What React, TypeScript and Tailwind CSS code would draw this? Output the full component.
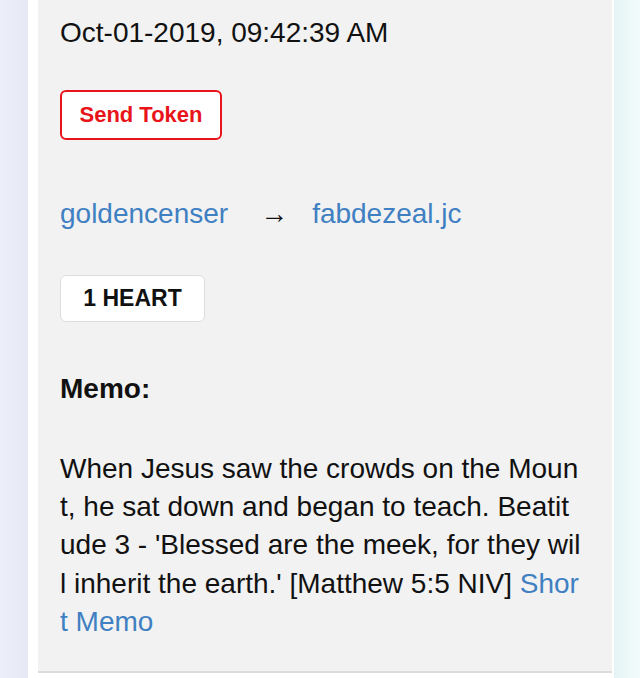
export default function App() {
  return (
    <div
      className="flex h-[678px] w-[640px] overflow-hidden bg-white"
      style={{ fontFamily: '"Liberation Sans", Arial, Helvetica, sans-serif' }}
    >
      {/* left page background */}
      <div className="w-[28px] shrink-0 bg-gradient-to-r from-[#eceef9] to-[#e6e8f5]" />

      {/* card */}
      <div className="flex w-[586px] shrink-0 flex-col bg-white pl-[10px] pr-[2px]">
        <div className="border-b-2 border-[#dcdcdc] bg-[#f2f2f2] pb-[30px] pl-[22px] pr-[31px] pt-[14px] text-[28px] leading-[38.25px] text-[#111]">
          <p className="whitespace-nowrap">Oct-01-2019, 09:42:39 AM</p>

          <div className="mt-[38px]">
            <button className="h-[50px] w-[162px] rounded-[6px] border-2 border-[#e8141a] bg-white text-[22px] font-bold text-[#e8141a]">
              Send Token
            </button>
          </div>

          <p className="mt-[55px] whitespace-nowrap">
            <a className="text-[#3f80c2]">goldencenser</a>
            <span className="ml-[30px] mr-[22px] inline-block w-[32px] text-center text-[#111]">→</span>
            <a className="text-[#3f80c2]">fabdezeal.jc</a>
          </p>

          <div className="mt-[41px]">
            <span className="inline-flex h-[47px] w-[145px] items-center justify-center rounded-[6px] border border-[#dddddd] bg-white text-[23px] font-bold text-[#111]">
              1 HEART
            </span>
          </div>

          <p className="mt-[48px] font-bold">Memo:</p>

          <p className="mt-[42px] break-all">
            When Jesus saw the crowds on the Mount, he sat down and began to teach. Beatitude 3 - 'Blessed are the meek, for they will inherit the earth.' [Matthew 5:5 NIV]{' '}
            <a className="text-[#3f80c2]">Short Memo</a>
          </p>
        </div>
      </div>

      {/* right page background */}
      <div className="flex-1 bg-gradient-to-r from-[#e4f4f4] to-[#f3fbfb]" />
    </div>
  )
}
